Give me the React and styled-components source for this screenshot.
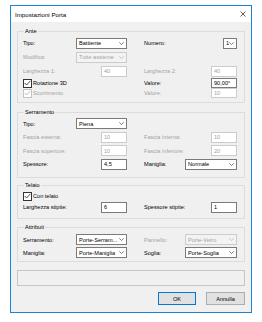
import React from "react";
import styled, { createGlobalStyle } from "styled-components";

const GlobalStyle = createGlobalStyle`
  html, body {
    margin: 0;
    background: #ffffff;
  }
  body {
    font-family: "Liberation Sans", Arial, sans-serif;
    color: #000;
  }
`;

const Screen = styled.div`
  padding: 5px 0 0 10px;
`;

const Window = styled.div`
  width: 242px;
  height: 308px;
  box-sizing: border-box;
  border: 1px solid #1883d7;
  background: #f0f0f0;
  display: flex;
  flex-direction: column;
`;

const TitleBar = styled.div`
  height: 16px;
  flex: none;
  background: #ffffff;
  display: flex;
  align-items: center;
  justify-content: space-between;
  padding: 0 5px 0 4px;
  font-size: 6.2px;
`;

const Body = styled.div`
  flex: 1;
  display: flex;
  flex-direction: column;
  padding: 6px 6px 0 6px;
`;

const Group = styled.fieldset`
  margin: ${(p) => p.$top || 0}px 0 0 0;
  padding: ${(p) => p.$padTop || 0}px 6px ${(p) => p.$padBottom || 4}px 5px;
  border: 1px solid #dcdcdc;
  min-width: 0;
`;

const Legend = styled.legend`
  padding: 0 1px;
  margin-left: 1px;
  font-size: 5.6px;
  line-height: 7px;
`;

const Grid = styled.div`
  display: grid;
  grid-template-columns: 104px 93px;
  grid-template-rows: ${(p) => p.$rows};
  column-gap: 17px;
`;

const Field = styled.div`
  display: flex;
  align-items: center;
  justify-content: space-between;
  min-width: 0;
`;

const Label = styled.span`
  font-size: 5.6px;
  white-space: nowrap;
  color: ${(p) => (p.$off ? "#a3a3a3" : "#000")};
`;

const Box = styled.div`
  box-sizing: border-box;
  width: ${(p) => p.$w}px;
  height: ${(p) => p.$h || 11}px;
  border: 1px solid ${(p) => (p.$off ? "#cccccc" : "#7a7a7a")};
  background: ${(p) => (p.$off && p.$select ? "#f3f3f3" : "#ffffff")};
  color: ${(p) => (p.$off ? "#a3a3a3" : "#000")};
  font-size: 5.6px;
  display: flex;
  align-items: center;
  justify-content: space-between;
  padding: 0 2px 0 2px;
  white-space: nowrap;
  overflow: hidden;
`;

const CheckRow = styled.label`
  display: flex;
  align-items: center;
  gap: 1px;
  font-size: 5.6px;
  color: ${(p) => (p.$off ? "#a3a3a3" : "#000")};
`;

const CheckBox = styled.span`
  box-sizing: border-box;
  width: 9px;
  height: 9px;
  border: 1px solid ${(p) => (p.$off ? "#c4c4c4" : "#333333")};
  background: #ffffff;
  display: flex;
  align-items: center;
  justify-content: center;
`;

const Status = styled.div`
  margin-top: 8px;
  height: 16px;
  box-sizing: border-box;
  border: 1px solid #c6c6c6;
  background: #f0f0f0;
`;

const Buttons = styled.div`
  margin-top: 6px;
  display: flex;
  justify-content: flex-end;
  gap: 10px;
`;

const Button = styled.button`
  box-sizing: border-box;
  width: ${(p) => p.$w}px;
  height: 13px;
  padding: 0;
  border: 1px solid ${(p) => (p.$primary ? "#0078d7" : "#adadad")};
  background: #e1e1e1;
  font-family: inherit;
  font-size: 5.6px;
  color: #000;
`;

function Chevron({ off }) {
  return (
    <svg width="5" height="3" viewBox="0 0 5 3">
      <polyline
        points="0.3,0.4 2.5,2.5 4.7,0.4"
        fill="none"
        stroke={off ? "#b0b0b0" : "#444"}
        strokeWidth="0.7"
      />
    </svg>
  );
}

function Select({ w, h, off, children }) {
  return (
    <Box $w={w} $h={h} $off={off} $select>
      <span>{children}</span>
      <Chevron off={off} />
    </Box>
  );
}

function Input({ w = 26, h, off, children }) {
  return (
    <Box $w={w} $h={h} $off={off}>
      {children}
    </Box>
  );
}

function Check({ off, children }) {
  return (
    <CheckRow $off={off}>
      <CheckBox $off={off}>
        <svg width="7" height="6" viewBox="0 0 7 6">
          <polyline
            points="0.6,3 2.6,5 6.4,0.8"
            fill="none"
            stroke={off ? "#b0b0b0" : "#222"}
            strokeWidth="0.8"
          />
        </svg>
      </CheckBox>
      {children}
    </CheckRow>
  );
}

function CloseIcon() {
  return (
    <svg width="6" height="6" viewBox="0 0 6 6">
      <path d="M0.5 0.5 L5.5 5.5 M5.5 0.5 L0.5 5.5" stroke="#222" strokeWidth="0.7" />
    </svg>
  );
}

export default function App() {
  return (
    <Screen>
      <GlobalStyle />
      <Window>
        <TitleBar>
          <span>Impostazioni Porta</span>
          <CloseIcon />
        </TitleBar>
        <Body>
          <Group $padTop={1} $padBottom={4}>
            <Legend>Ante</Legend>
            <Grid $rows="14px 14px 14px 10px 10px">
              <Field>
                <Label>Tipo:</Label>
                <Select w={51}>Battiente</Select>
              </Field>
              <Field>
                <Label>Numero:</Label>
                <Select w={14}>1</Select>
              </Field>
              <Field>
                <Label $off>Modifica:</Label>
                <Select w={51} off>Tutte assieme</Select>
              </Field>
              <Field />
              <Field>
                <Label $off>Larghezza 1:</Label>
                <Input off>40</Input>
              </Field>
              <Field>
                <Label $off>Larghezza 2:</Label>
                <Input off>40</Input>
              </Field>
              <Field>
                <Check>Rotazione 3D</Check>
              </Field>
              <Field>
                <Label>Valore:</Label>
                <Input h={10}>90,00°</Input>
              </Field>
              <Field>
                <Check off>Scorrimento</Check>
              </Field>
              <Field>
                <Label $off>Valore:</Label>
                <Input h={10} off>10</Input>
              </Field>
            </Grid>
          </Group>

          <Group $top={6} $padTop={1} $padBottom={6}>
            <Legend>Serramento</Legend>
            <Grid $rows="13.5px 13.5px 13.5px 13.5px">
              <Field>
                <Label>Tipo:</Label>
                <Select w={51}>Piena</Select>
              </Field>
              <Field />
              <Field>
                <Label $off>Fascia esterna:</Label>
                <Input off>10</Input>
              </Field>
              <Field>
                <Label $off>Fascia interna:</Label>
                <Input off>10</Input>
              </Field>
              <Field>
                <Label $off>Fascia superiore:</Label>
                <Input off>10</Input>
              </Field>
              <Field>
                <Label $off>Fascia inferiore:</Label>
                <Input off>20</Input>
              </Field>
              <Field>
                <Label>Spessore:</Label>
                <Input>4,5</Input>
              </Field>
              <Field>
                <Label>Maniglia:</Label>
                <Select w={52}>Normale</Select>
              </Field>
            </Grid>
          </Group>

          <Group $top={4} $padTop={2} $padBottom={5}>
            <Legend>Telaio</Legend>
            <Grid $rows="10px 12px">
              <Field>
                <Check>Con telaio</Check>
              </Field>
              <Field />
              <Field>
                <Label>Larghezza stipite:</Label>
                <Input>6</Input>
              </Field>
              <Field>
                <Label>Spessore stipite:</Label>
                <Input>1</Input>
              </Field>
            </Grid>
          </Group>

          <Group $top={5} $padTop={2} $padBottom={2}>
            <Legend>Attributi</Legend>
            <Grid $rows="13px 13px">
              <Field>
                <Label>Serramento:</Label>
                <Select w={51}>Porte-Serram...</Select>
              </Field>
              <Field>
                <Label $off>Pannello:</Label>
                <Select w={52} off>Porte-Vetro</Select>
              </Field>
              <Field>
                <Label>Maniglia:</Label>
                <Select w={51}>Porte-Maniglia</Select>
              </Field>
              <Field>
                <Label>Soglia:</Label>
                <Select w={52}>Porte-Soglia</Select>
              </Field>
            </Grid>
          </Group>

          <Status />

          <Buttons>
            <Button $w={38} $primary>OK</Button>
            <Button $w={39}>Annulla</Button>
          </Buttons>
        </Body>
      </Window>
    </Screen>
  );
}
